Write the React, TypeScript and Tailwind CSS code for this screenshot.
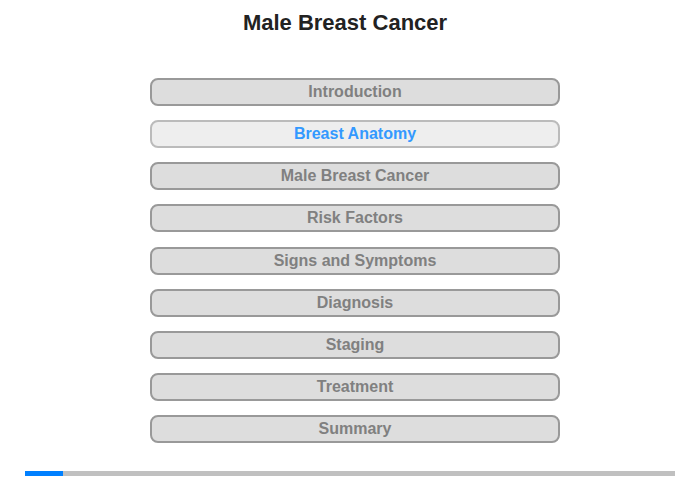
import React from "react";

const items = [
  "Introduction",
  "Breast Anatomy",
  "Male Breast Cancer",
  "Risk Factors",
  "Signs and Symptoms",
  "Diagnosis",
  "Staging",
  "Treatment",
  "Summary",
];

export default function App() {
  return (
    <div
      className="w-[700px] h-[480px] bg-white relative overflow-hidden"
      style={{ fontFamily: '"Liberation Sans", Arial, sans-serif' }}
    >
      <div className="w-[690px] pt-[10px] text-center text-[22px] leading-[25px] font-bold text-[#222222]">
        Male Breast Cancer
      </div>
      <div className="mt-[43px] ml-[150px] w-[410px] flex flex-col gap-[14.125px]">
        {items.map((t, i) => {
          const active = i === 1;
          return (
            <div
              key={t}
              className={
                active
                  ? "h-[28px] rounded-[8px] border-2 border-[#bbbbbb] bg-[#eeeeee] text-[#3399ff] text-center text-[16px] leading-[24px] font-bold"
                  : "h-[28px] rounded-[8px] border-2 border-[#999999] bg-[#dddddd] text-[#808080] text-center text-[16px] leading-[24px] font-bold"
              }
            >
              {t}
            </div>
          );
        })}
      </div>
      <div className="absolute left-[25px] top-[471px] w-[650px] h-[5px] bg-[#c0c0c0] flex">
        <div className="w-[38px] h-full bg-[#0080ff]" />
      </div>
    </div>
  );
}
